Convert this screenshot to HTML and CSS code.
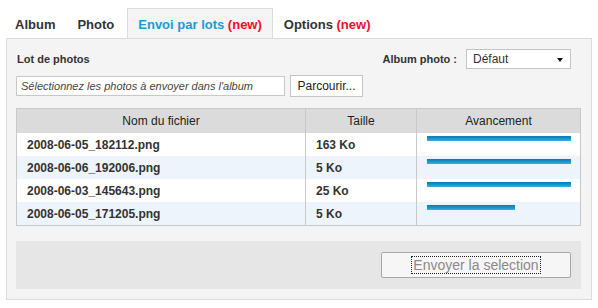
FILE: index.html
```html
<!DOCTYPE html>
<html lang="fr">
<head>
  <meta charset="UTF-8" />
  <title>Envoi par lots</title>
  <link rel="stylesheet" href="styles.css">
</head>
<body>
  <ul class="tabs">
    <li class="tab">Album</li>
    <li class="tab">Photo</li>
    <li class="tab active">Envoi par lots <span class="new">(new)</span></li>
    <li class="tab">Options <span class="new">(new)</span></li>
  </ul>

  <div class="panel">
    <div class="top-row">
      <span class="label">Lot de photos</span>
      <div class="album-pick">
        <span class="label">Album photo :</span>
        <div class="select">Défaut<span class="arrow"></span></div>
      </div>
    </div>

    <div class="file-row">
      <input type="text" class="file-input" placeholder="Sélectionnez les photos à envoyer dans l'album" />
      <button class="browse">Parcourir...</button>
    </div>

    <table class="files">
      <thead>
        <tr>
          <th class="col-name">Nom du fichier</th>
          <th class="col-size">Taille</th>
          <th class="col-progress">Avancement</th>
        </tr>
      </thead>
      <tbody>
        <tr>
          <td>2008-06-05_182112.png</td>
          <td>163 Ko</td>
          <td><div class="bar" style="width: 144px"></div></td>
        </tr>
        <tr>
          <td>2008-06-06_192006.png</td>
          <td>5 Ko</td>
          <td><div class="bar" style="width: 144px"></div></td>
        </tr>
        <tr>
          <td>2008-06-03_145643.png</td>
          <td>25 Ko</td>
          <td><div class="bar" style="width: 144px"></div></td>
        </tr>
        <tr>
          <td>2008-06-05_171205.png</td>
          <td>5 Ko</td>
          <td><div class="bar" style="width: 88px"></div></td>
        </tr>
      </tbody>
    </table>

    <div class="actions">
      <button class="send"><span class="focus">Envoyer la selection</span></button>
    </div>
  </div>
</body>
</html>
```

FILE: styles.css
```css
body {
  margin: 0;
  font-family: 'Liberation Sans', Arial, sans-serif;
  color: #333;
  background: #fff;
}
.tabs {
  display: flex;
  list-style: none;
  margin: 8px 0 0;
  padding: 0 0 0 4px;
  position: relative;
  z-index: 1;
}
.tab {
  height: 29px;
  line-height: 31px;
  padding: 0 10px;
  border: 1px solid transparent;
  border-bottom: none;
  font-size: 13px;
  font-weight: bold;
  color: #333;
}
.tab.active {
  margin-left: 2px;
  background: #f4f4f4;
  border-color: #dcdcdc;
  color: #1b9ad6;
}
.new {
  color: #e8102a;
}
.panel {
  margin: 0 6px;
  border: 1px solid #dcdcdc;
  background: #f4f4f4;
  padding: 10px 10px 10px 9px;
}
.top-row {
  display: flex;
  justify-content: space-between;
  align-items: center;
  height: 20px;
  padding: 0 10px 0 1px;
}
.label {
  font-size: 11px;
  font-weight: bold;
}
.album-pick {
  display: flex;
  align-items: center;
  gap: 9px;
}
.select {
  position: relative;
  box-sizing: border-box;
  width: 105px;
  height: 20px;
  line-height: 18px;
  padding-left: 6px;
  border: 1px solid #c4c4c4;
  background: #fff;
  font-size: 12px;
}
.arrow {
  position: absolute;
  right: 7px;
  top: 8px;
  border-left: 3px solid transparent;
  border-right: 3px solid transparent;
  border-top: 4px solid #111;
}
.file-row {
  display: flex;
  align-items: center;
  gap: 5px;
  margin-top: 6px;
}
.file-input {
  box-sizing: border-box;
  width: 269px;
  height: 20px;
  margin: 0;
  padding: 0 4px;
  border: 1px solid #c8c8c8;
  background: #fff;
  font-family: inherit;
  font-size: 11px;
}
.file-input::placeholder {
  color: #444;
  font-style: italic;
}
.browse {
  box-sizing: border-box;
  width: 73px;
  height: 22px;
  margin: 0;
  padding: 0;
  border: 1px solid #c4c4c4;
  background: #fff;
  font-family: inherit;
  font-size: 12px;
  color: #222;
}
.files {
  width: 565px;
  margin-top: 11px;
  border-collapse: collapse;
  border: 1px solid #c8c8c8;
  table-layout: fixed;
}
.files th {
  height: 24px;
  padding: 0;
  background: #dbdbdb;
  font-size: 12px;
  font-weight: normal;
  color: #222;
  border-left: 1px solid #c8c8c8;
  text-align: center;
}
.col-name {
  width: 288px;
}
.col-size {
  width: 110px;
}
.files td {
  height: 23px;
  padding: 0 0 0 10px;
  font-size: 12px;
  font-weight: bold;
  border-left: 1px solid #c8c8c8;
  background: #fff;
}
.files tbody tr:nth-child(even) td {
  background: #edf4fc;
}
.files td:last-child {
  vertical-align: top;
  padding-left: 10px;
}
.bar {
  height: 5px;
  margin-top: 3px;
  background: linear-gradient(#0b78ad, #1a9ad0 60%, #3db0e0);
}
.actions {
  display: flex;
  justify-content: flex-end;
  align-items: center;
  height: 48px;
  margin-top: 15px;
  padding-right: 10px;
  background: #e6e6e6;
}
.send {
  box-sizing: border-box;
  width: 190px;
  height: 26px;
  padding: 0;
  border: 1px solid #a8a8a8;
  border-radius: 2px;
  background: #f6f6f6;
  font-family: inherit;
  font-size: 14px;
  color: #8a8a8a;
}
.focus {
  outline: 1px dotted #222;
  padding: 0 1px;
}
```
